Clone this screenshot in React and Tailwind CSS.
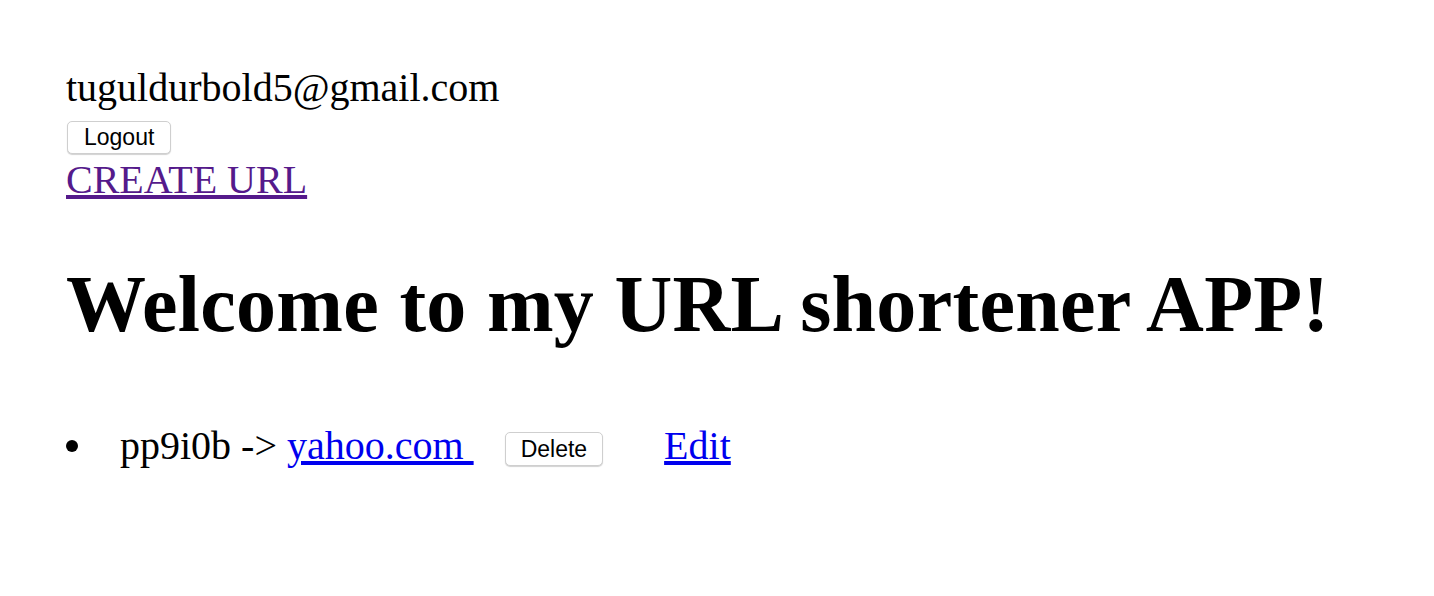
import React from 'react';

const btn =
  "inline-block rounded-[5px] border border-[#cfcfcf] bg-white align-[2px] text-[23px] text-black shadow-[0_1px_1px_rgba(0,0,0,0.18)] [font-family:'Liberation_Sans',Arial,sans-serif]";

export default function App() {
  return (
    <div className="min-h-[596px] bg-white pl-[66px] pt-[65px] text-[40px] leading-[46px] text-black [font-family:'Liberation_Serif','Times_New_Roman',serif]">
      <div>tuguldurbold5@gmail.com</div>
      <div>
        <button className={`${btn} ml-px px-[16px] leading-[31px]`}>Logout</button>
      </div>
      <div>
        <a href="#" className="text-[#551a8b] underline">CREATE URL</a>
      </div>

      <h1 className="mt-[55px] text-[80px] font-bold leading-[92px] tracking-[0.3px]">
        Welcome to my URL shortener APP!
      </h1>

      <ul className="mt-[73px]">
        <li>
          <span className="inline-block w-[54px]">
            <span className="inline-block h-[12px] w-[12px] rounded-full bg-black align-[7px]"></span>
          </span>
          pp9i0b -&gt;{' '}
          <a href="#" className="text-[#0000ee] underline">yahoo.com </a>
          <button className={`${btn} ml-[31px] px-[15px] leading-[32px]`}>Delete</button>
          <a href="#" className="ml-[61px] text-[#0000ee] underline">Edit</a>
        </li>
      </ul>
    </div>
  );
}
